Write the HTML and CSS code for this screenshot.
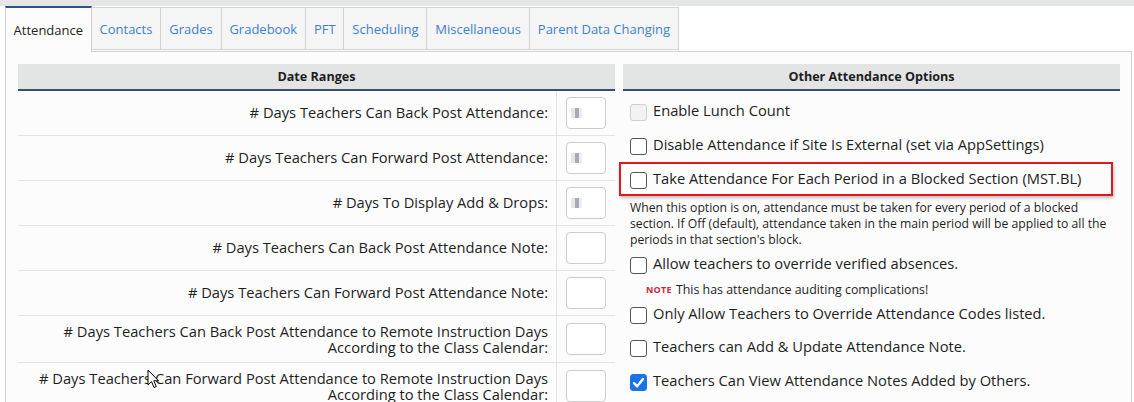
FILE: index.html
```html
<!DOCTYPE html>
<html>
<head>
<meta charset="utf-8">
<link rel="stylesheet" href="styles.css">
</head>
<body>
<div class="strip"></div>
<div class="tabs">
  <div class="tab active">Attendance</div>
  <div class="tab">Contacts</div>
  <div class="tab">Grades</div>
  <div class="tab">Gradebook</div>
  <div class="tab">PFT</div>
  <div class="tab">Scheduling</div>
  <div class="tab">Miscellaneous</div>
  <div class="tab">Parent Data Changing</div>
</div>
<div class="panel">
  <div class="cols">
    <section class="sec">
      <div class="sec-head">Date Ranges</div>
      <div class="row"><div class="lbl">#&nbsp;Days Teachers Can Back Post Attendance:</div><div class="cell"><div class="inp"><span class="blur"></span></div></div></div>
      <div class="row"><div class="lbl">#&nbsp;Days Teachers Can Forward Post Attendance:</div><div class="cell"><div class="inp"><span class="blur"></span></div></div></div>
      <div class="row"><div class="lbl">#&nbsp;Days To Display Add &amp; Drops:</div><div class="cell"><div class="inp"><span class="blur"></span></div></div></div>
      <div class="row"><div class="lbl">#&nbsp;Days Teachers Can Back Post Attendance Note:</div><div class="cell"><div class="inp"></div></div></div>
      <div class="row"><div class="lbl">#&nbsp;Days Teachers Can Forward Post Attendance Note:</div><div class="cell"><div class="inp"></div></div></div>
      <div class="row tall"><div class="lbl">#&nbsp;Days Teachers Can Back Post Attendance to Remote Instruction Days<br>According to the Class Calendar:</div><div class="cell"><div class="inp"></div></div></div>
      <div class="row tall"><div class="lbl">#&nbsp;Days Teachers Can Forward Post Attendance to Remote Instruction Days<br>According to the Class Calendar:</div><div class="cell"><div class="inp"></div></div></div>
    </section>
    <section class="sec">
      <div class="sec-head">Other Attendance Options</div>
      <div class="opts">
        <div class="opt"><span class="cb disabled"></span><span>Enable Lunch Count</span></div>
        <div class="opt"><span class="cb"></span><span>Disable Attendance if Site Is External (set via AppSettings)</span></div>
        <div class="opt hl"><span class="cb"></span><span>Take Attendance For Each Period in a Blocked Section (MST.BL)</span></div>
        <p class="desc">When this option is on, attendance must be taken for every period of a blocked section. If Off (default), attendance taken in the main period will be applied to all the periods in that section's block.</p>
        <div class="opt short"><span class="cb"></span><span>Allow teachers to override verified absences.</span></div>
        <div class="note"><span class="note-tag">NOTE</span>This has attendance auditing complications!</div>
        <div class="opt short"><span class="cb"></span><span>Only Allow Teachers to Override Attendance Codes listed.</span></div>
        <div class="opt"><span class="cb"></span><span>Teachers can Add &amp; Update Attendance Note.</span></div>
        <div class="opt"><span class="cb checked"><svg viewBox="0 0 17 17" width="17" height="17"><path d="M4 9.2 L7.2 12.3 L13 5" fill="none" stroke="#fff" stroke-width="2.4" stroke-linecap="round" stroke-linejoin="round"/></svg></span><span>Teachers Can View Attendance Notes Added by Others.</span></div>
      </div>
    </section>
  </div>
</div>
<svg class="cursor" width="13" height="20" viewBox="0 0 13 20"><path d="M1 1 L1 16 L4.5 12.5 L7 18.5 L9.3 17.5 L6.8 11.8 L11.5 11.8 Z" fill="#fff" stroke="#000" stroke-width="1" stroke-linejoin="round"/></svg>
</body>
</html>
```
FILE: styles.css
```css
* { box-sizing: border-box; }
html, body { margin: 0; padding: 0; background: #fff; }
body {
  font-family: "Open Sans", "Liberation Sans", Arial, sans-serif;
  color: #1e1e1e;
  position: relative;
  height: 402px;
  overflow: hidden;
}
.strip { height: 6px; background: #e4e5e5; }

.tabs {
  display: flex;
  align-items: flex-end;
  margin-left: 5px;
  width: 1127px;
  height: 46px;
  border-bottom: 1px solid #cfcfcf;
}
.tab {
  height: 43px;
  margin-bottom: 1px;
  padding: 0 7.9px;
  display: flex;
  align-items: center;
  background: #f5f5f5;
  border: 1px solid #d3d3d3;
  border-left: none;
  color: #3f7fd0;
  font-size: 13px;
  white-space: nowrap;
}
.tab.active {
  height: 46px;
  margin-bottom: -1px;
  padding: 0 7.6px;
  background: #fcfcfc;
  color: #1e1e1e;
  border-top: 2px solid #2c4f93;
  border-left: 1px solid #cfcfcf;
  border-right: 1px solid #cfcfcf;
  border-bottom: none;
}

.panel {
  margin-left: 5px;
  width: 1127px;
  height: 360px;
  background: #fcfcfc;
  border-left: 1px solid #cfcfcf;
  border-right: 1px solid #cfcfcf;
  padding: 12px 11px 0 12px;
}
.cols {
  display: grid;
  grid-template-columns: 597px 497px;
  column-gap: 8px;
}
.sec-head {
  height: 27px;
  background: #e3e4e4;
  border-bottom: 2px solid #3a4d6b;
  display: flex;
  align-items: center;
  justify-content: center;
  font-weight: 700;
  font-size: 12.6px;
  color: #1e1e1e;
}

.row {
  display: flex;
  border-bottom: 1px solid #e4e4e4;
}
.lbl {
  width: 539px;
  border-right: 1px solid #e4e4e4;
  padding-right: 8px;
  padding-bottom: 3px;
  display: flex;
  align-items: center;
  justify-content: flex-end;
  text-align: right;
  font-size: 14.7px;
  line-height: 16px;
}
.row.tall .lbl { padding-bottom: 1px; }
.cell {
  flex: 1;
  padding: 6px 9px;
}
.row.tall .cell { padding: 7px 9px; }
.inp {
  width: 40px;
  height: 32px;
  border: 1px solid #cccccc;
  border-radius: 4px;
  background: #fff;
  display: flex;
  align-items: center;
}
.blur {
  width: 11px;
  height: 10px;
  margin-left: 4px;
  background: linear-gradient(90deg, #e9e4df 0 35%, #a9aaad 35% 75%, #e6effa 75%);
}

.opts { padding: 3px 0 0 7px; font-size: 14.7px; }
.opt {
  height: 34px;
  display: flex;
  align-items: center;
  gap: 6px;
  white-space: nowrap;
}
.opt > span:last-child { margin-top: -2px; }
.opt.short { height: 32px; }
.opt.hl {
  margin-left: -11px;
  margin-right: 7px;
  padding-left: 9px;
  border: 2px solid #e4161d;
  box-shadow: 1px 2px 3px rgba(0,0,0,0.25);
}
.cb {
  width: 17px;
  height: 17px;
  flex: none;
  border: 1px solid #555;
  border-radius: 3px;
  background: #fff;
  margin-top: 2px;
}
.cb.disabled { border-color: #cfcfcf; background: #f2f2f2; }
.cb.checked { border-color: #1a73e8; background: #1a73e8; }
.cb svg { display: block; margin: -1px; }

.desc {
  margin: 4px 0 0 0;
  font-size: 12.2px;
  line-height: 16px;
  padding-right: 2px;
}
.note {
  height: 18px;
  padding-left: 16px;
  display: flex;
  align-items: center;
  font-size: 12.4px;
}
.note-tag {
  color: #c8283a;
  font-weight: 700;
  font-size: 9px;
  margin-right: 4px;
  letter-spacing: 0.3px;
}

.cursor {
  position: absolute;
  left: 147px;
  top: 369px;
}
```
